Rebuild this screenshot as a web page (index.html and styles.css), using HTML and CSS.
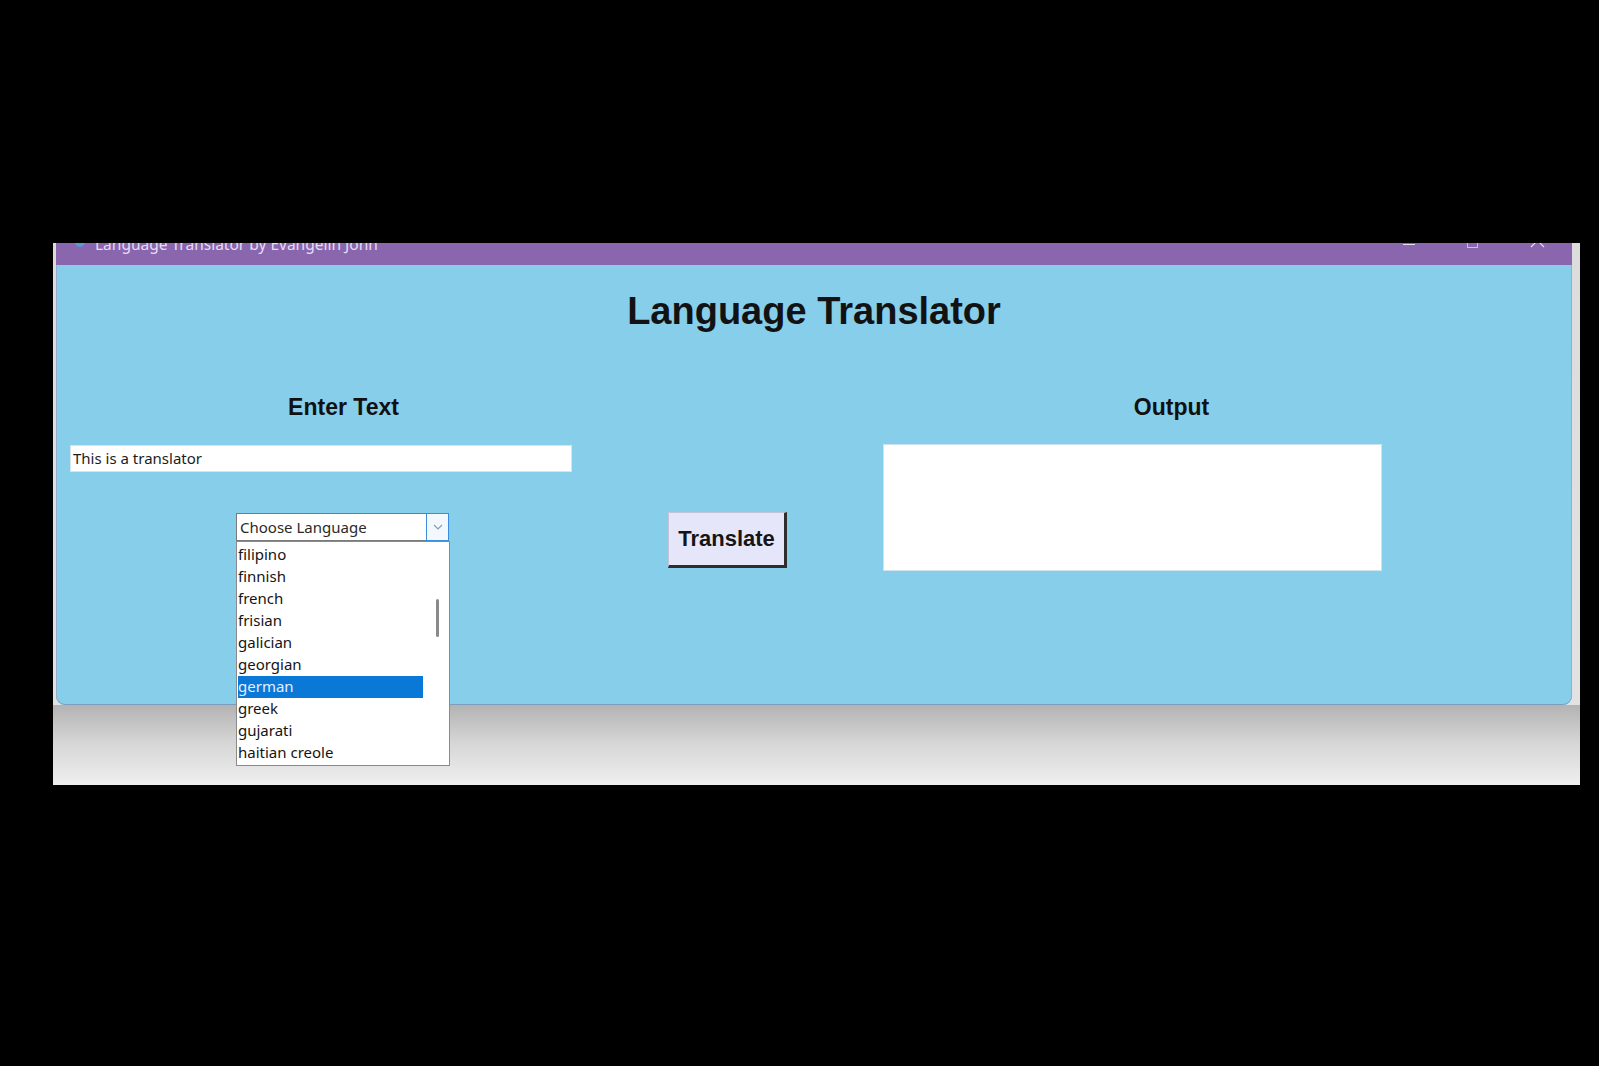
FILE: index.html
```html
<!DOCTYPE html>
<html lang="en">
<head>
<meta charset="utf-8">
<title>Language Translator</title>
<link rel="stylesheet" href="styles.css">
</head>
<body>
<div class="frame">
  <div class="window">
    <div class="titlebar">
      <span class="app-icon"></span>
      <span class="title">Language Translator by Evangelin John</span>
      <div class="controls">
        <span class="ctl-min"></span>
        <span class="ctl-max"></span>
        <svg class="ctl-close" width="15" height="15" viewBox="0 0 15 15"><path d="M1 1 L14 14 M14 1 L1 14" stroke="#e6dcf2" stroke-width="1.2" fill="none"/></svg>
      </div>
    </div>
    <div class="content">
      <h1 class="heading">Language Translator</h1>
      <div class="labels">
        <div class="label label-input">Enter Text</div>
        <div class="label label-output">Output</div>
      </div>
      <div class="workarea">
        <div class="input-col">
          <div class="entry">This is a translator</div>
          <div class="combo">
            <div class="combo-field">
              <span class="combo-text">Choose Language</span>
              <span class="combo-btn"><svg width="10" height="6" viewBox="0 0 10 6"><path d="M1 1 L5 5 L9 1" stroke="#7f9fc0" stroke-width="1.2" fill="none"/></svg></span>
            </div>
            <div class="dropdown">
              <ul class="options">
                <li>filipino</li>
                <li>finnish</li>
                <li>french</li>
                <li>frisian</li>
                <li>galician</li>
                <li>georgian</li>
                <li class="active">german</li>
                <li>greek</li>
                <li>gujarati</li>
                <li>haitian creole</li>
              </ul>
              <div class="scrollbar"><span class="thumb"></span></div>
            </div>
          </div>
        </div>
        <button class="translate">Translate</button>
        <div class="output"></div>
      </div>
    </div>
  </div>
</div>
</body>
</html>
```

FILE: styles.css
```css
html, body {
  margin: 0;
  padding: 0;
  background: #000;
}

body {
  height: 1066px;
  overflow: hidden;
}

.frame {
  margin: 243px 0 0 53px;
  width: 1527px;
  height: 542px;
  background: linear-gradient(to bottom, #dcdcdc 0px, #e2e2e2 462px, #b3b3b3 462px, #d6d6d6 500px, #efefef 542px);
}

.window {
  margin-left: 3px;
  width: 1516px;
  height: 462px;
  background: #87ceeb;
  border-radius: 0 0 9px 9px;
  box-shadow: inset 1px 0 0 #8eb1cf, inset -1px 0 0 #8eb1cf, inset 0 -1px 0 #7c9dbd;
}

.titlebar {
  height: 22px;
  background: #8a66ae;
  overflow: hidden;
  display: flex;
  align-items: flex-start;
  color: #e6dcf2;
}

.app-icon {
  width: 10px;
  height: 10px;
  border-radius: 50%;
  background: #5b9ad6;
  margin: -6px 0 0 19px;
  flex: none;
}

.title {
  margin: -9px 0 0 10px;
  font: 15.5px/21px "Noto Sans", "Open Sans", sans-serif;
  white-space: nowrap;
}

.controls {
  margin-left: auto;
  display: flex;
  align-items: flex-start;
}

.ctl-min {
  width: 12px;
  height: 1px;
  background: #e6dcf2;
  margin-top: 1px;
}

.ctl-max {
  width: 11px;
  height: 10px;
  box-sizing: border-box;
  border: 1px solid #cdbde0;
  margin: -5px 0 0 52px;
}

.ctl-close {
  display: block;
  margin: -10px 27px 0 52px;
}

.content {
  height: 440px;
}

.heading {
  margin: 0;
  padding-top: 24px;
  font: bold 38px/44px "Liberation Sans", Arial, sans-serif;
  text-align: center;
  color: #121212;
}

.labels {
  margin-top: 61px;
  display: flex;
}

.label {
  width: 201px;
  text-align: center;
  font: bold 23px/27px "Liberation Sans", Arial, sans-serif;
  color: #111;
}

.label-input {
  margin-left: 187px;
}

.label-output {
  margin-left: 627px;
}

.workarea {
  margin-top: 23px;
  padding-left: 14px;
  display: flex;
  align-items: flex-start;
}

.input-col {
  width: 502px;
  flex: none;
}

.entry {
  margin-top: 1px;
  width: 502px;
  height: 27px;
  box-sizing: border-box;
  background: #fff;
  border: 1px solid #d6e4ee;
  padding-left: 2px;
  font: 15px/25px "Noto Sans", "Open Sans", sans-serif;
  color: #1c1c1c;
}

.combo {
  margin: 41px 0 0 166px;
  width: 213px;
  position: relative;
}

.combo-field {
  height: 28px;
  box-sizing: border-box;
  display: flex;
  background: #fff;
  border: 1px solid #7a7a7a;
  border-right: none;
}

.combo-text {
  flex: 1;
  padding-left: 3px;
  font: 15px/26px "Noto Sans", "Open Sans", sans-serif;
  color: #2a2a2a;
}

.combo-btn {
  width: 23px;
  margin: -1px 0;
  box-sizing: border-box;
  border: 1px solid #3b8de0;
  background: #f3f8fd;
  display: flex;
  align-items: center;
  justify-content: center;
}

.dropdown {
  position: absolute;
  top: 100%;
  left: 0;
  width: 214px;
  height: 225px;
  box-sizing: border-box;
  background: #fff;
  border: 1px solid #8a8a8a;
  display: flex;
  z-index: 5;
}

.options {
  list-style: none;
  margin: 0;
  padding: 2px 0 0 1px;
  width: 185px;
  flex: none;
}

.options li {
  height: 22px;
  padding-left: 0;
  font: 15px/21px "Noto Sans", "Open Sans", sans-serif;
  color: #141414;
}

.options li.active {
  background: #0a78d6;
  color: #e4efff;
}

.scrollbar {
  flex: 1;
  display: flex;
  justify-content: center;
  padding: 57px 0 0 3px;
}

.thumb {
  width: 3px;
  height: 38px;
  background: #8a8a8a;
  border-radius: 2px;
}

.translate {
  margin: 68px 0 0 96px;
  width: 119px;
  height: 56px;
  box-sizing: border-box;
  padding: 0;
  background: #e6e6fa;
  border-style: solid;
  border-width: 1px 3px 3px 1px;
  border-color: #c4c4d6 #2e2e2e #2e2e2e #c4c4d6;
  font: bold 22px "Liberation Sans", Arial, sans-serif;
  color: #151515;
  flex: none;
}

.output {
  margin-left: 96px;
  width: 499px;
  height: 127px;
  box-sizing: border-box;
  background: #fff;
  border: 1px solid #cfe2ee;
  flex: none;
}
```
